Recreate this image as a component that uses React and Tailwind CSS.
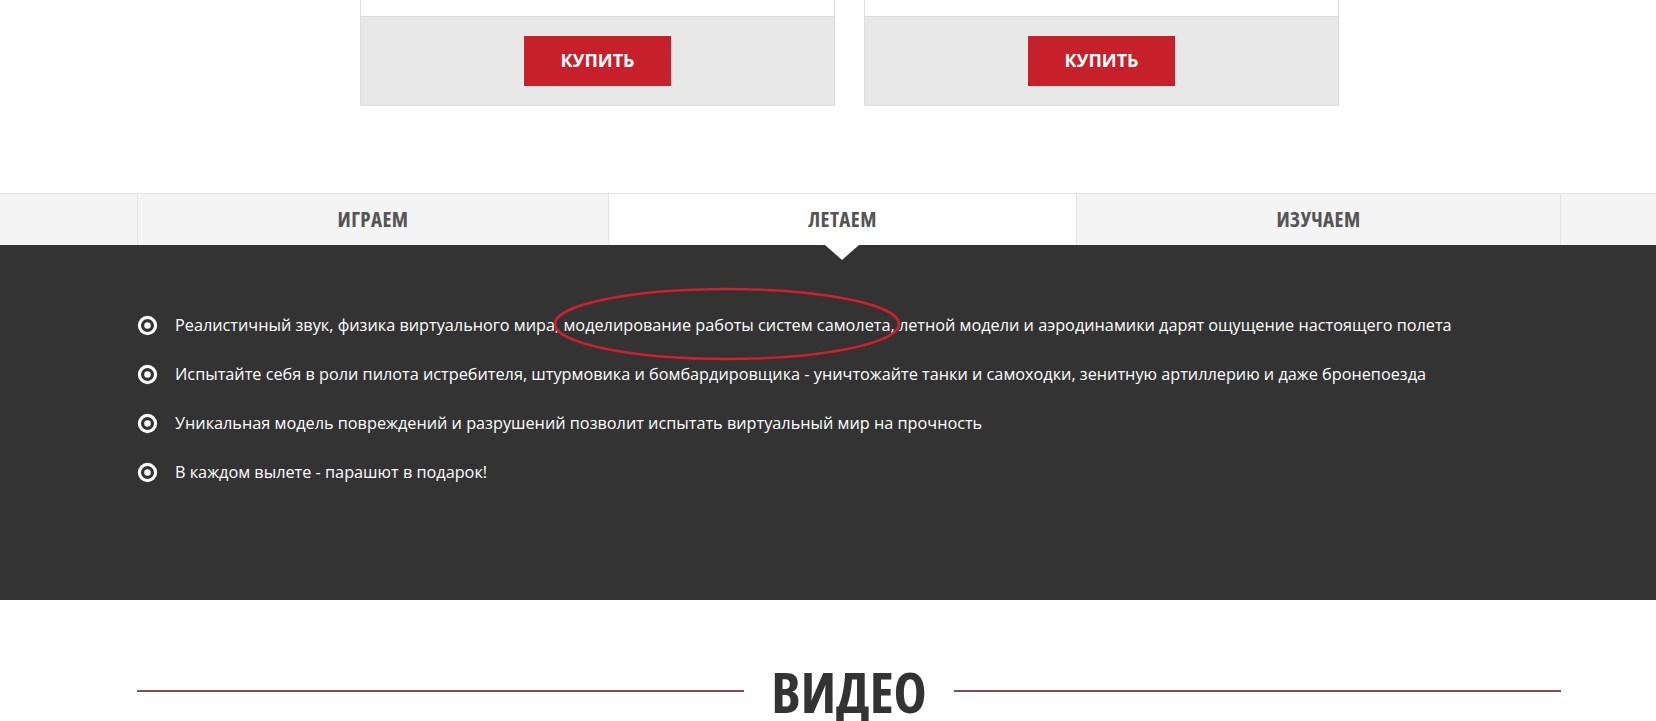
import { Fragment } from "react";

const features = [
  "Реалистичный звук, физика виртуального мира, моделирование работы систем самолета, летной модели и аэродинамики дарят ощущение настоящего полета",
  "Испытайте себя в роли пилота истребителя, штурмовика и бомбардировщика - уничтожайте танки и самоходки, зенитную артиллерию и даже бронепоезда",
  "Уникальная модель повреждений и разрушений позволит испытать виртуальный мир на прочность",
  "В каждом вылете - парашют в подарок!",
];

const tabs = [
  { label: "ИГРАЕМ", w: "w-[471px]" },
  { label: "ЛЕТАЕМ", w: "w-[468px]", active: true },
  { label: "ИЗУЧАЕМ", w: "w-[485px]" },
];

const DotCircle = () => (
  <svg width="21" height="21" viewBox="0 0 20 20" className="shrink-0">
    <circle cx="10" cy="10" r="7.7" fill="none" stroke="white" strokeWidth="3" />
    <circle cx="10" cy="10" r="3.1" fill="white" />
  </svg>
);

const BuyCard = () => (
  <div className="w-[475px] border border-[#dddddd] border-t-0">
    <div className="h-[17px] bg-white border-b border-[#dddddd]" />
    <div className="h-[88px] bg-[#e8e8e8] flex items-center justify-center">
      <button className="w-[147px] h-[50px] bg-[#c8202a] text-white font-bold text-[18px] mb-[1px]">
        КУПИТЬ
      </button>
    </div>
  </div>
);

export default function App() {
  return (
    <div className="w-[1656px] h-[721px] overflow-hidden bg-white font-['Open_Sans','Liberation_Sans',sans-serif]">
      {/* Cards */}
      <div className="flex gap-[29px] ml-[360px]">
        <BuyCard />
        <BuyCard />
      </div>

      {/* Tabs */}
      <div className="mt-[87px] border-t border-[#e4e4e4] bg-[#f4f4f4]">
        <div className="ml-[137px] flex h-[51px]">
          {tabs.map((t, i) => (
            <div
              key={t.label}
              className={`${t.w} flex items-center justify-center border-l border-[#e4e4e4] text-[21px] font-bold font-stretch-condensed tracking-[0.02em] text-[#555555] ${
                t.active ? "bg-white" : ""
              } ${i === 2 ? "border-r" : ""}`}
            >
              {t.label}
            </div>
          ))}
        </div>
      </div>

      {/* Features */}
      <div className="relative bg-[#333333] h-[355px] pt-[69px] pl-[137px]">
        <div className="absolute left-[825px] top-0 w-0 h-0 border-l-[17px] border-r-[17px] border-t-[15px] border-l-transparent border-r-transparent border-t-white" />
        <ul className="flex flex-col gap-[26px]">
          {features.map((f) => (
            <li key={f} className="flex items-center gap-[17px] text-white text-[16.25px] leading-[23px]">
              <DotCircle />
              <span>{f}</span>
            </li>
          ))}
        </ul>
        <svg className="absolute left-[552px] top-[41px]" width="350" height="76" viewBox="0 0 350 76">
          <ellipse cx="175" cy="38" rx="172" ry="35" fill="none" stroke="#d0202a" strokeWidth="2.5" />
        </svg>
      </div>

      {/* Video heading */}
      <div className="mt-[63px] ml-[137px] w-[1424px] flex items-center gap-[27px]">
        <div className="flex-1 h-[2px] bg-[#8b4a4e]" />
        <h2 className="text-[56px] leading-none font-bold font-stretch-condensed text-[#333333]">
          ВИДЕО
        </h2>
        <div className="flex-1 h-[2px] bg-[#8b4a4e]" />
      </div>
    </div>
  );
}
